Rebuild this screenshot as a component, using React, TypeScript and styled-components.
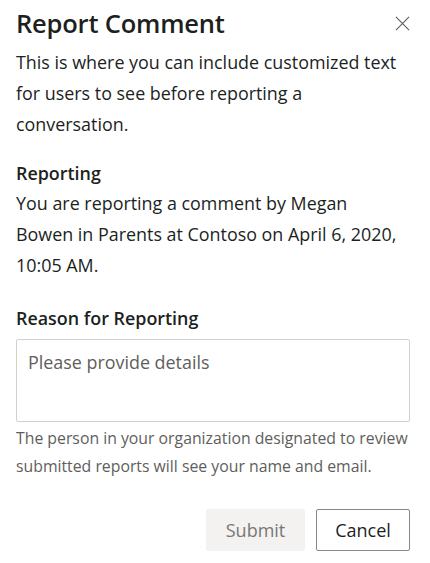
import React from 'react';
import styled, { createGlobalStyle } from 'styled-components';

const GlobalStyle = createGlobalStyle`
  html, body {
    margin: 0;
    padding: 0;
    background: #fff;
  }
  body {
    font-family: "Open Sans", "Noto Sans", sans-serif;
    color: #201f1e;
  }
`;

const Dialog = styled.div`
  width: 430px;
  height: 563px;
  box-sizing: border-box;
  padding: 2px 20px 0 16px;
  display: flex;
  flex-direction: column;
  background: #fff;
`;

const Header = styled.div`
  display: flex;
  align-items: center;
  justify-content: space-between;
  height: 42px;
  margin-bottom: 3px;
`;

const Title = styled.h1`
  margin: 0;
  font-size: 25.5px;
  font-weight: 600;
  color: #201f1e;
  letter-spacing: -0.2px;
`;

const CloseButton = styled.button`
  border: none;
  background: none;
  padding: 0;
  width: 16px;
  height: 16px;
  display: flex;
  align-items: center;
  justify-content: center;
  cursor: pointer;
`;

const Text = styled.p<{ $muted?: boolean; $small?: boolean }>`
  margin: 0;
  font-size: ${p => (p.$small ? '15.8px' : '17.9px')};
  line-height: ${p => (p.$small ? '28px' : '30.8px')};
  color: ${p => (p.$muted ? '#605e5c' : '#201f1e')};
`;

const Section = styled.div<{ $top: number }>`
  margin-top: ${p => p.$top}px;
  display: flex;
  flex-direction: column;
`;

const Label = styled.div`
  font-size: 17.9px;
  font-weight: 600;
  line-height: 30px;
  color: #201f1e;
`;

const TextArea = styled.textarea`
  margin: 6px 0 2px;
  width: 100%;
  height: 83px;
  box-sizing: border-box;
  border: 1px solid #d2d0ce;
  border-radius: 2px;
  padding: 10px 11px;
  resize: none;
  font-family: inherit;
  font-size: 17.9px;
  line-height: 24px;
  color: #201f1e;
  outline: none;
  &::placeholder {
    color: #605e5c;
  }
`;

const Footer = styled.div`
  margin-top: 29px;
  display: flex;
  justify-content: flex-end;
  gap: 11px;
`;

const Button = styled.button<{ $disabled?: boolean }>`
  height: 42px;
  box-sizing: border-box;
  padding: 0 16px;
  border-radius: 2px;
  font-family: inherit;
  font-size: 18px;
  font-weight: 500;
  cursor: pointer;
  border: 1px solid ${p => (p.$disabled ? '#f3f2f1' : '#8a8886')};
  background: ${p => (p.$disabled ? '#f3f2f1' : '#fff')};
  color: ${p => (p.$disabled ? '#797775' : '#201f1e')};
  width: ${p => (p.$disabled ? '99px' : '94px')};
`;

const App: React.FC = () => {
  return (
    <>
      <GlobalStyle />
      <Dialog>
        <Header>
          <Title>Report Comment</Title>
          <CloseButton aria-label="Close">
            <svg width="15" height="15" viewBox="0 0 16 16" fill="none">
              <path d="M1 1L15 15M15 1L1 15" stroke="#605e5c" strokeWidth="1.2" />
            </svg>
          </CloseButton>
        </Header>
        <Text>
          This is where you can include customized text for users to see before reporting a
          conversation.
        </Text>

        <Section $top={19}>
          <Label>Reporting</Label>
          <Text>
            You are reporting a comment by Megan
            <br />
            Bowen in Parents at Contoso on April 6, 2020,
            <br />
            10:05 AM.
          </Text>
        </Section>

        <Section $top={22}>
          <Label>Reason for Reporting</Label>
          <TextArea placeholder="Please provide details" />
          <Text $muted $small>
            The person in your organization designated to review submitted reports will see your
            name and email.
          </Text>
        </Section>

        <Footer>
          <Button $disabled>Submit</Button>
          <Button>Cancel</Button>
        </Footer>
      </Dialog>
    </>
  );
};

export default App;
